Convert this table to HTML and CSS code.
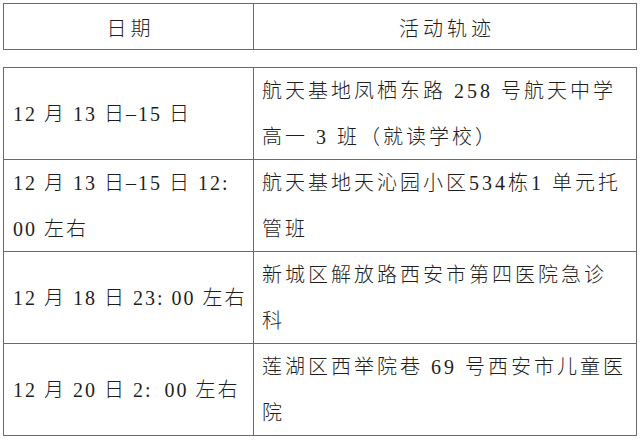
FILE: index.html
```html
<!DOCTYPE html>
<html lang="zh-CN">
<head>
<meta charset="utf-8">
<title>活动轨迹</title>
<link rel="stylesheet" href="styles.css">
</head>
<body>
<div class="page">
  <div class="sheet head">
    <div class="row">
      <div class="cell date">日期</div>
      <div class="cell place">活动轨迹</div>
    </div>
  </div>
  <div class="sheet body">
    <div class="row">
      <div class="cell date"><span><i class="n">12</i> 月 <i class="n">13</i> 日<i class="n">–15</i> 日</span></div>
      <div class="cell place">航天基地凤栖东路 <i class="n">258</i> 号航天中学<br>高一 <i class="n">3</i> 班（就读学校）</div>
    </div>
    <div class="row">
      <div class="cell date"><span><i class="n">12</i> 月 <i class="n">13</i> 日<i class="n">–15</i> 日 <i class="n">12:</i><br><i class="n">00</i> 左右</span></div>
      <div class="cell place">航天基地天沁园小区<i class="n">534</i>栋<i class="n">1</i> 单元托<br>管班</div>
    </div>
    <div class="row">
      <div class="cell date"><span><i class="n">12</i> 月 <i class="n">18</i> 日 <i class="n">23: 00</i> 左右</span></div>
      <div class="cell place">新城区解放路西安市第四医院急诊<br>科</div>
    </div>
    <div class="row">
      <div class="cell date"><span><i class="n">12</i> 月 <i class="n">20</i> 日 <i class="n">2:&ensp;00</i> 左右</span></div>
      <div class="cell place">莲湖区西举院巷 <i class="n">69</i> 号西安市儿童医<br>院</div>
    </div>
  </div>
</div>
</body>
</html>
```
FILE: styles.css
```css
html, body {
  margin: 0;
  background: #ffffff;
}

.page {
  padding: 3px 0 0 3px;
  font-family: "Liberation Serif", "Noto Sans CJK SC Light", "Noto Sans CJK SC", serif;
  font-size: 20px;
  font-weight: normal;
  color: #1e1e1e;
}

.n {
  font-style: normal;
  font-family: "Liberation Serif", "Times New Roman", serif;
}

.sheet {
  width: 634px;
  box-sizing: border-box;
  border: 1px solid #6a6a6a;
}

.row {
  display: flex;
}

.cell {
  box-sizing: border-box;
  white-space: nowrap;
}

.cell.date {
  flex: none;
  width: 250px;
  border-right: 1px solid #6a6a6a;
}

.cell.place {
  flex: 1;
}

/* header table */
.head .row {
  height: 45px;
}

.head .cell {
  text-align: center;
  line-height: 40px;
  padding-top: 5px;
  padding-left: 4px;
  letter-spacing: 4px;
}

/* body table */
.body {
  margin-top: 17px;
}

.body .row {
  height: 91px;
}

.body .row + .row {
  border-top: 1px solid #6a6a6a;
}

.body .cell.date {
  display: flex;
  align-items: center;
  padding-left: 9px;
  line-height: 46px;
  letter-spacing: 2px;
}

.body .cell.place {
  padding-left: 8px;
  line-height: 46px;
  letter-spacing: 3px;
}
```
